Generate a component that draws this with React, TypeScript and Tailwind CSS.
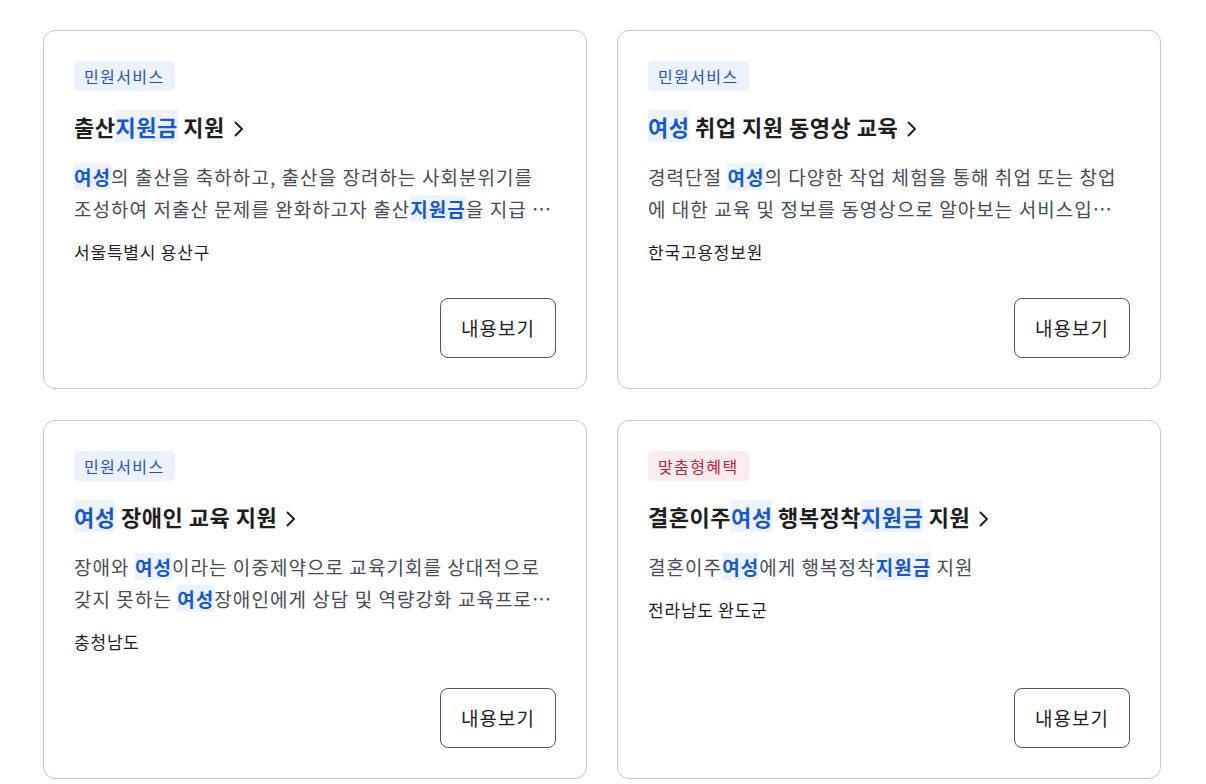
import React from "react";

type Seg = { t: string; hl?: boolean };

type Item = {
  tag: string;
  tagTone: "blue" | "red";
  title: Seg[];
  desc: Seg[];
  org: string;
};

const items: Item[] = [
  {
    tag: "민원서비스",
    tagTone: "blue",
    title: [{ t: "출산" }, { t: "지원금", hl: true }, { t: " 지원" }],
    desc: [
      { t: "여성", hl: true },
      { t: "의 출산을 축하하고, 출산을 장려하는 사회분위기를 조성하여 저출산 문제를 완화하고자 출산" },
      { t: "지원금", hl: true },
      { t: "을 지급 하여 출산 가정의 경제적 부담을 덜어드립니다." },
    ],
    org: "서울특별시 용산구",
  },
  {
    tag: "민원서비스",
    tagTone: "blue",
    title: [{ t: "여성", hl: true }, { t: " 취업 지원 동영상 교육" }],
    desc: [
      { t: "경력단절 " },
      { t: "여성", hl: true },
      { t: "의 다양한 작업 체험을 통해 취업 또는 창업에 대한 교육 및 정보를 동영상으로 알아보는 서비스입니다." },
    ],
    org: "한국고용정보원",
  },
  {
    tag: "민원서비스",
    tagTone: "blue",
    title: [{ t: "여성", hl: true }, { t: " 장애인 교육 지원" }],
    desc: [
      { t: "장애와 " },
      { t: "여성", hl: true },
      { t: "이라는 이중제약으로 교육기회를 상대적으로 갖지 못하는 " },
      { t: "여성", hl: true },
      { t: "장애인에게 상담 및 역량강화 교육프로그램을 지원합니다." },
    ],
    org: "충청남도",
  },
  {
    tag: "맞춤형혜택",
    tagTone: "red",
    title: [
      { t: "결혼이주" },
      { t: "여성", hl: true },
      { t: " 행복정착" },
      { t: "지원금", hl: true },
      { t: " 지원" },
    ],
    desc: [
      { t: "결혼이주" },
      { t: "여성", hl: true },
      { t: "에게 행복정착" },
      { t: "지원금", hl: true },
      { t: " 지원" },
    ],
    org: "전라남도 완도군",
  },
];

function Chevron() {
  return (
    <svg width="14" height="18" viewBox="0 0 14 18" fill="none" className="inline-block ml-[7px] mb-[3px]">
      <path d="M3.5 2.5 L10 9 L3.5 15.5" stroke="#222" strokeWidth="2" strokeLinecap="round" strokeLinejoin="round" />
    </svg>
  );
}

function Card({ item }: { item: Item }) {
  const tagCls =
    item.tagTone === "blue"
      ? "bg-[#ebf1fd] text-[#2a4bbf]"
      : "bg-[#fdecee] text-[#b3243f]";
  return (
    <div className="h-[359px] rounded-[12px] border border-[#c3c7cd] bg-white flex flex-col px-[30px] pt-[30px] pb-[30px]">
      <div className="flex">
        <span className={"h-[30px] px-[10px] rounded-[4px] text-[16px] tracking-[1.4px] leading-[30px] " + tagCls}>
          {item.tag}
        </span>
      </div>
      <a className="mt-[20px] text-[22px] leading-[30px] font-bold text-[#1e1e1e] tracking-[0.5px]">
        {item.title.map((s, i) =>
          s.hl ? (
            <span key={i} className="bg-[#ecf2fe] text-[#1556d6]">
              {s.t}
            </span>
          ) : (
            <span key={i}>{s.t}</span>
          )
        )}
        <Chevron />
      </a>
      <p className="mt-[20px] text-[19px] tracking-[1.05px] leading-[32px] text-[#464c55] line-clamp-2">
        {item.desc.map((s, i) =>
          s.hl ? (
            <span key={i} className="bg-[#ecf2fe] text-[#1556d6] font-bold">
              {s.t}
            </span>
          ) : (
            <span key={i}>{s.t}</span>
          )
        )}
      </p>
      <div className="mt-[15px] text-[17px] tracking-[0.8px] leading-[24px] text-[#1e1e1e]">{item.org}</div>
      <div className="mt-auto flex justify-end">
        <button className="w-[116px] h-[60px] rounded-[8px] border border-[#50565e] bg-white text-[19px] tracking-[1px] text-[#1e1e1e]">
          내용보기
        </button>
      </div>
    </div>
  );
}

export default function App() {
  return (
    <div
      className="min-h-screen bg-white pl-[43px] pt-[30px]"
      style={{ fontFamily: '"Noto Sans CJK KR", "Noto Sans", sans-serif' }}
    >
      <div className="w-[1118px] grid grid-cols-2 gap-x-[30px] gap-y-[31px]">
        {items.map((it, i) => (
          <Card key={i} item={it} />
        ))}
      </div>
    </div>
  );
}
